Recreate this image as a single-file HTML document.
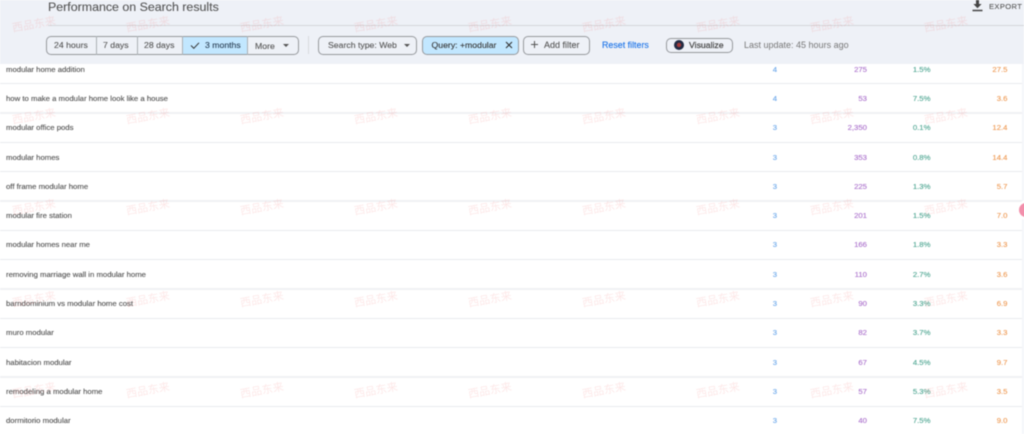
<!DOCTYPE html>
<html><head><meta charset="utf-8">
<style>
html,body{margin:0;padding:0}
body{width:1024px;height:434px;overflow:hidden;position:relative;background:#fff;font-family:"Liberation Sans","Noto Sans CJK SC",sans-serif}
#wrap{position:absolute;left:0;top:0;width:1024px;height:434px;filter:blur(.4px)}
.a{position:absolute;white-space:nowrap}
.r{position:absolute;left:0;width:1022px;height:20px;margin-top:1px;line-height:20px;font-size:7.75px;color:#505050;-webkit-text-stroke:.12px currentColor}
.r span{position:absolute;top:0;white-space:nowrap}
.q{left:6px}
.c1{right:245px;color:#6fa9ea}
.c2{right:155px;color:#ab72cc}
.c3{right:91.5px;color:#4fa692}
.c4{right:14.5px;color:#ee9a55}
.l{position:absolute;left:0;width:1022px;background:#e9ebee}
.l2{background:#f0f1f4}
.w{position:absolute;width:60px;height:20px;line-height:20px;text-align:center;font-size:11px;color:rgba(240,110,110,.16);transform:rotate(-10deg);white-space:nowrap}
.b{position:absolute;box-sizing:border-box;border:1px solid #96999d;border-radius:5px;font-size:8.7px;color:#555;line-height:17px;white-space:nowrap;-webkit-text-stroke:.1px currentColor}
.d{position:absolute;top:36px;width:1px;height:18.5px;background:#acb0b4}
.t{position:absolute;top:36px;height:18.5px;line-height:18px;font-size:8.7px;color:#555;white-space:nowrap;-webkit-text-stroke:.1px currentColor}
</style></head><body>
<div id="wrap">
<div class="a" style="left:0;top:0;width:1024px;height:64px;background:#eef1f7"></div>
<div class="a" style="left:48px;top:25px;width:976px;height:1px;background:#d4d6da"></div>
<div class="a" style="left:48px;top:-1px;font-size:12.4px;line-height:16px;color:#555;-webkit-text-stroke:.1px #555">Performance on Search results</div>

<svg class="a" style="left:971px;top:0" width="13" height="12" viewBox="0 0 13 12"><path d="M5 0h3v4h2.600L6.500 8.200 2.400 4H5z M1.500 9.800h10v1.400h-10z" fill="#444"/></svg>
<div class="a" style="left:989px;top:1px;font-size:7.6px;line-height:12px;letter-spacing:.35px;color:#555;-webkit-text-stroke:.1px #555">EXPORT</div>

<div class="b" style="left:46px;top:36px;width:253px;height:18.500px"></div>
<div class="a" style="left:183px;top:37px;width:64px;height:17px;background:#c2e7ff"></div>
<div class="d" style="left:96px"></div><div class="d" style="left:137px"></div><div class="d" style="left:182px"></div><div class="d" style="left:247px"></div>
<div class="t" style="left:54px">24 hours</div>
<div class="t" style="left:103px">7 days</div>
<div class="t" style="left:144px">28 days</div>
<svg class="a" style="left:190px;top:41px" width="10" height="9" viewBox="0 0 10 9"><path d="M1 4.500L3.800 7.300 9 1.800" fill="none" stroke="#333" stroke-width="1"/></svg>
<div class="t" style="left:205px;color:#2a3f55">3 months</div>
<div class="t" style="left:255px;top:36.500px">More</div>
<svg class="a" style="left:283px;top:44px" width="6" height="3" viewBox="0 0 6 3"><path d="M0 0h6L3 3z" fill="#555"/></svg>

<div class="a" style="left:308px;top:36px;width:1px;height:18px;background:#d8dade"></div>

<div class="b" style="left:318px;top:36px;width:99px;height:18.500px;padding-left:9px">Search type: Web</div>
<svg class="a" style="left:404px;top:44px" width="6" height="3" viewBox="0 0 6 3"><path d="M0 0h6L3 3z" fill="#555"/></svg>

<div class="b" style="left:421.500px;top:36px;width:97px;height:18.500px;background:#c2e7ff;padding-left:9px;color:#333">Query: +modular</div>
<svg class="a" style="left:505px;top:41px" width="8" height="8" viewBox="0 0 8 8"><path d="M1 1l6 6M7 1L1 7" stroke="#333" stroke-width="1.100" fill="none"/></svg>

<div class="b" style="left:523px;top:36px;width:67px;height:18.500px;padding-left:20px;font-size:9px">Add filter</div>
<svg class="a" style="left:530px;top:40px" width="9" height="9" viewBox="0 0 9 9"><path d="M4.500 1v7M1 4.500h7" stroke="#555" stroke-width="1" fill="none"/></svg>

<div class="t" style="left:602px;color:#1a73e8;font-size:8.900px">Reset filters</div>

<div class="b" style="left:666px;top:37.500px;width:67px;height:15px;line-height:13.500px;padding-left:22px;color:#444;-webkit-text-stroke:.2px #444">Visualize</div>
<svg class="a" style="left:674px;top:40px" width="10" height="10" viewBox="0 0 10 10"><circle cx="5" cy="5" r="5" fill="#232c44"/><circle cx="5" cy="5" r="2.200" fill="#a33a3a"/></svg>

<div class="a" style="left:744px;top:35.500px;line-height:18px;font-size:9px;color:#777">Last update: 45 hours ago</div>

<div class="r" style="top:58.500px"><span class="q">modular home addition</span><span class="c1">4</span><span class="c2">275</span><span class="c3">1.5%</span><span class="c4">27.5</span></div>
<div class="r" style="top:88px"><span class="q">how to make a modular home look like a house</span><span class="c1">4</span><span class="c2">53</span><span class="c3">7.5%</span><span class="c4">3.6</span></div>
<div class="r" style="top:117px"><span class="q">modular office pods</span><span class="c1">3</span><span class="c2">2,350</span><span class="c3">0.1%</span><span class="c4">12.4</span></div>
<div class="r" style="top:146.500px"><span class="q">modular homes</span><span class="c1">3</span><span class="c2">353</span><span class="c3">0.8%</span><span class="c4">14.4</span></div>
<div class="r" style="top:175.500px"><span class="q">off frame modular home</span><span class="c1">3</span><span class="c2">225</span><span class="c3">1.3%</span><span class="c4">5.7</span></div>
<div class="r" style="top:205px"><span class="q">modular fire station</span><span class="c1">3</span><span class="c2">201</span><span class="c3">1.5%</span><span class="c4">7.0</span></div>
<div class="r" style="top:234px"><span class="q">modular homes near me</span><span class="c1">3</span><span class="c2">166</span><span class="c3">1.8%</span><span class="c4">3.3</span></div>
<div class="r" style="top:263.500px"><span class="q">removing marriage wall in modular home</span><span class="c1">3</span><span class="c2">110</span><span class="c3">2.7%</span><span class="c4">3.6</span></div>
<div class="r" style="top:293px"><span class="q">barndominium vs modular home cost</span><span class="c1">3</span><span class="c2">90</span><span class="c3">3.3%</span><span class="c4">6.9</span></div>
<div class="r" style="top:322px"><span class="q">muro modular</span><span class="c1">3</span><span class="c2">82</span><span class="c3">3.7%</span><span class="c4">3.3</span></div>
<div class="r" style="top:351.500px"><span class="q">habitacion modular</span><span class="c1">3</span><span class="c2">67</span><span class="c3">4.5%</span><span class="c4">9.7</span></div>
<div class="r" style="top:381px"><span class="q">remodeling a modular home</span><span class="c1">3</span><span class="c2">57</span><span class="c3">5.3%</span><span class="c4">3.5</span></div>
<div class="r" style="top:410px"><span class="q">dormitorio modular</span><span class="c1">3</span><span class="c2">40</span><span class="c3">7.5%</span><span class="c4">9.0</span></div>

<div class="l" style="top:83px;height:1px"></div>
<div class="l l2" style="top:112px;height:2px"></div>
<div class="l" style="top:142px;height:1px"></div>
<div class="l" style="top:171px;height:1px"></div>
<div class="l l2" style="top:200px;height:2px"></div>
<div class="l" style="top:230px;height:1px"></div>
<div class="l" style="top:259px;height:1px"></div>
<div class="l l2" style="top:288px;height:2px"></div>
<div class="l" style="top:318px;height:1px"></div>
<div class="l" style="top:347px;height:1px"></div>
<div class="l l2" style="top:376px;height:2px"></div>
<div class="l" style="top:406px;height:1px"></div>

<div class="a" style="left:1022px;top:64px;width:2px;height:370px;background:#f4f6fa"></div>
<div class="a" style="left:1017px;top:200px;width:20px;height:20px;border-radius:50%;background:#fff"></div>
<div class="a" style="left:1019px;top:203px;width:14px;height:14px;border-radius:50%;background:#f28fab"></div>

<div class="w" style="left:4px;top:15px">西品东来</div><div class="w" style="left:118px;top:15px">西品东来</div><div class="w" style="left:232px;top:15px">西品东来</div><div class="w" style="left:346px;top:15px">西品东来</div><div class="w" style="left:460px;top:15px">西品东来</div><div class="w" style="left:574px;top:15px">西品东来</div><div class="w" style="left:688px;top:15px">西品东来</div><div class="w" style="left:802px;top:15px">西品东来</div><div class="w" style="left:916px;top:15px">西品东来</div>
<div class="w" style="left:4px;top:106.500px">西品东来</div><div class="w" style="left:118px;top:106.500px">西品东来</div><div class="w" style="left:232px;top:106.500px">西品东来</div><div class="w" style="left:346px;top:106.500px">西品东来</div><div class="w" style="left:460px;top:106.500px">西品东来</div><div class="w" style="left:574px;top:106.500px">西品东来</div><div class="w" style="left:688px;top:106.500px">西品东来</div><div class="w" style="left:802px;top:106.500px">西品东来</div><div class="w" style="left:916px;top:106.500px">西品东来</div>
<div class="w" style="left:4px;top:198px">西品东来</div><div class="w" style="left:118px;top:198px">西品东来</div><div class="w" style="left:232px;top:198px">西品东来</div><div class="w" style="left:346px;top:198px">西品东来</div><div class="w" style="left:460px;top:198px">西品东来</div><div class="w" style="left:574px;top:198px">西品东来</div><div class="w" style="left:688px;top:198px">西品东来</div><div class="w" style="left:802px;top:198px">西品东来</div><div class="w" style="left:916px;top:198px">西品东来</div>
<div class="w" style="left:4px;top:289.500px">西品东来</div><div class="w" style="left:118px;top:289.500px">西品东来</div><div class="w" style="left:232px;top:289.500px">西品东来</div><div class="w" style="left:346px;top:289.500px">西品东来</div><div class="w" style="left:460px;top:289.500px">西品东来</div><div class="w" style="left:574px;top:289.500px">西品东来</div><div class="w" style="left:688px;top:289.500px">西品东来</div><div class="w" style="left:802px;top:289.500px">西品东来</div><div class="w" style="left:916px;top:289.500px">西品东来</div>
<div class="w" style="left:4px;top:381px">西品东来</div><div class="w" style="left:118px;top:381px">西品东来</div><div class="w" style="left:232px;top:381px">西品东来</div><div class="w" style="left:346px;top:381px">西品东来</div><div class="w" style="left:460px;top:381px">西品东来</div><div class="w" style="left:574px;top:381px">西品东来</div><div class="w" style="left:688px;top:381px">西品东来</div><div class="w" style="left:802px;top:381px">西品东来</div><div class="w" style="left:916px;top:381px">西品东来</div>
</div>
</body></html>
